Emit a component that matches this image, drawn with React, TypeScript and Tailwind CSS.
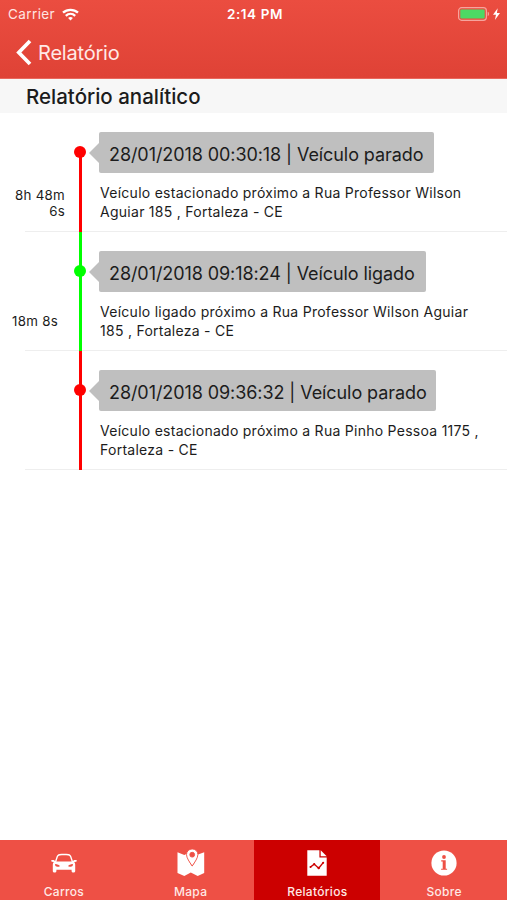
import React from "react";

interface TimelineEvent {
  id: number;
  title: string;
  lines: string[];
  duration: string[];
  moving: boolean;
  /** Width of the title bubble, text included. */
  bubbleClass: string;
}

const EVENTS: TimelineEvent[] = [
  {
    id: 1,
    title: "28/01/2018 00:30:18 | Veículo parado",
    lines: [
      "Veículo estacionado próximo a Rua Professor Wilson",
      "Aguiar 185 , Fortaleza - CE",
    ],
    duration: ["8h 48m", "6s"],
    moving: false,
    bubbleClass: "w-[335px]",
  },
  {
    id: 2,
    title: "28/01/2018 09:18:24 | Veículo ligado",
    lines: [
      "Veículo ligado próximo a Rua Professor Wilson Aguiar",
      "185 , Fortaleza - CE",
    ],
    duration: ["18m 8s"],
    moving: true,
    bubbleClass: "w-[327px]",
  },
  {
    id: 3,
    title: "28/01/2018 09:36:32 | Veículo parado",
    lines: [
      "Veículo estacionado próximo a Rua Pinho Pessoa 1175 ,",
      "Fortaleza - CE",
    ],
    duration: [],
    moving: false,
    bubbleClass: "w-[337px]",
  },
];

function WifiIcon() {
  return (
    <svg width="17" height="13" viewBox="0 0 17 13" fill="none" stroke="#fff" strokeWidth="2.3">
      <path d="M1 4.7C5.2.8 11.8.8 16 4.7" />
      <path d="M3.8 7.8c2.7-2.5 6.7-2.5 9.4 0" />
      <path d="M8.5 12.4 6.1 10c1.4-1.2 3.4-1.2 4.8 0z" fill="#fff" stroke="none" />
    </svg>
  );
}

function BatteryIcon() {
  return (
    <svg width="44" height="14" viewBox="0 0 44 14">
      <rect x="0.6" y="0.7" width="27.8" height="12.6" rx="3" fill="none" stroke="#f6a49d" strokeWidth="1.2" />
      <rect x="2.3" y="2.5" width="24.4" height="9" rx="1.2" fill="#4cd964" />
      <path d="M29.7 4.8c1.8.6 1.8 3.8 0 4.4z" fill="#f6a49d" />
      <path d="M39.7 1.3 35 7.8h3l-1.1 5.3 5.1-7h-3.1z" fill="#fff" />
    </svg>
  );
}

function CarIcon() {
  return (
    <svg width="26" height="26" viewBox="0 0 26 26" fill="#fff">
      <path
        fillRule="evenodd"
        d="M8.4 4.1c3-.6 6.2-.6 9.2 0 1.5.3 2.4 1.2 2.9 2.6l1.4 4.2 1.3-.9h2c.7 0 .9 1.5 0 1.7l-2 .4c.7.8 1 1.6 1 2.6v6.4c0 2-3.6 2-3.6 0v-1.3H5.4v1.3c0 2-3.6 2-3.6 0v-6.4c0-1 .3-1.8 1-2.6l-2-.4c-.9-.2-.7-1.7 0-1.7h2l1.3.9 1.4-4.2c.5-1.4 1.4-2.3 2.9-2.6Zm.4 1.4c-1 .2-1.6.8-2 1.8l-1.4 4.1h15.2l-1.4-4.1c-.4-1-1-1.6-2-1.8-2.8-.5-5.6-.5-8.4 0ZM4.2 14c-.4 1.8.6 2.6 2.2 2.7 1 .1 2.2.1 2.4-.4.4-1-2.7-2.2-4.6-2.3Zm17.6 0c-1.9.1-5 1.3-4.6 2.3.2.5 1.4.5 2.4.4 1.6-.1 2.6-.9 2.2-2.7Z"
      />
    </svg>
  );
}

function MapIcon() {
  return (
    <svg width="28" height="28" viewBox="0 0 28 28" fill="#fff">
      <path d="M.5 3.2 7.3 5.9 10 4.7c.3 4.3 2.4 8.8 5.2 12.8 2.8-3.9 4.8-8.3 5.2-12.5l.6.5 6.2-2.3v20.9l-6.5 2.9-6.9-3.5-6.5 3.5-6.8-2.9z" />
      <path
        fillRule="evenodd"
        d="M15.2 0c3.3 0 5.7 2.4 5.7 5.5 0 3.4-2.9 7.4-5.7 11.5C12.4 12.9 9.5 8.9 9.5 5.5 9.5 2.4 11.9 0 15.2 0Zm0 3.3a2.4 2.4 0 1 0 0 4.8 2.4 2.4 0 0 0 0-4.8Z"
        stroke="#ee5045"
        strokeWidth="0.9"
      />
    </svg>
  );
}

function ReportIcon() {
  return (
    <svg width="20" height="26" viewBox="0 0 20 26">
      <path d="M.3.3h12.1v7.2h7.3v18.2H.3z" fill="#fff" />
      <path d="m13.7.3 6 6h-6z" fill="#fff" />
      <path d="m3.2 17.3 4-3.2 4.5 4.1 4.7-5.8" fill="none" stroke="#cc0000" strokeWidth="1.4" />
      <g fill="#cc0000">
        <circle cx="3.5" cy="17" r="1" />
        <circle cx="7.2" cy="14.2" r="1.1" />
        <circle cx="11.7" cy="18" r="1.2" />
        <circle cx="16.2" cy="12.7" r="1" />
      </g>
    </svg>
  );
}

function InfoIcon() {
  return (
    <svg width="26" height="26" viewBox="0 0 26 26">
      <circle cx="13" cy="13" r="12.6" fill="#fff" />
      <circle cx="13" cy="7" r="1.9" fill="#ee5045" />
      <path d="M10.2 10.3h4.5v8.4h1.4v1.1h-6v-1.1h1.6v-7.3h-1.5z" fill="#ee5045" />
    </svg>
  );
}

const TABS = [
  { label: "Carros", icon: <CarIcon /> },
  { label: "Mapa", icon: <MapIcon /> },
  { label: "Relatórios", icon: <ReportIcon />, active: true },
  { label: "Sobre", icon: <InfoIcon /> },
];

function TimelineRow({ event }: { event: TimelineEvent }) {
  const color = event.moving ? "bg-[#00ff00]" : "bg-[#ff0000]";
  // Nothing comes before the first stop, so its rail starts at the dot.
  const isFirst = event.id === 1;
  return (
    <li className="relative flex h-[119px]">
      <div className="absolute bottom-0 left-[25px] right-0 h-px bg-[#eeeeee]" />
      <div
        className={`flex h-full flex-col whitespace-nowrap text-right text-[13.3px] leading-4 tracking-[0.3px] ${
          event.duration.length > 1 ? "w-[65px] pt-[73.5px]" : "w-[58px] pt-[81px]"
        }`}
      >
        {event.duration.map((part) => (
          <span key={part}>{part}</span>
        ))}
      </div>
      <div
        className={`relative flex w-3 justify-center ${
          event.duration.length > 1 ? "ml-[9px]" : "ml-4"
        }`}
      >
        <div className={`w-[3px] ${color} ${isFirst ? "mt-[39px]" : ""}`} />
        <div className={`absolute top-[33px] size-3 rounded-full ${color}`} />
      </div>
      <div className="flex min-w-0 flex-1 flex-col items-start pt-[19px]">
        <div className="flex items-center pl-[3px]">
          <svg width="10" height="20" viewBox="0 0 10 20">
            <path d="M10 0v20L0 10z" fill="#bfbfbf" />
          </svg>
          <div
            className={`flex h-[41px] items-center whitespace-nowrap rounded-[2px] bg-[#bfbfbf] pl-[10px] pt-[3px] text-[18px] tracking-[-0.08px] ${event.bubbleClass}`}
          >
            {event.title}
          </div>
        </div>
        <div className="whitespace-nowrap pl-[14px] pt-[10px] text-[14px] leading-[19.4px] tracking-[0.27px]">
          {event.lines.map((line) => (
            <p key={line}>{line}</p>
          ))}
        </div>
      </div>
    </li>
  );
}

export default function App() {
  return (
    <div className="flex h-[900px] w-[507px] flex-col overflow-hidden bg-white font-['Inter',sans-serif] text-[#1c1c1c]">
      <header className="h-[79px] border-b border-[#e9675d] bg-linear-to-b from-[#eb4d40] to-[#df4236] text-white">
        <div className="grid h-[27px] grid-cols-3 items-center pl-2 pr-[5px] text-[13.5px]">
          <div className="flex items-center gap-[7px] pt-px tracking-[0.4px] text-[#ffe5e2]">
            Carrier
            <WifiIcon />
          </div>
          <div className="pt-px text-center font-semibold tracking-[0.6px]">2:14 PM</div>
          <div className="flex justify-end">
            <BatteryIcon />
          </div>
        </div>
        <div className="flex h-[51px] items-center pl-4">
          <svg width="16" height="27" viewBox="0 0 16 27">
            <path d="M14 2 2.8 13.5 14 25" fill="none" stroke="#fff" strokeWidth="3.7" />
          </svg>
          <span className="pl-[6px] text-[20px] tracking-[-0.2px] text-[#ffe9e6]">Relatório</span>
        </div>
      </header>

      <main className="flex-1">
        <h1 className="flex h-[34px] items-center bg-[#f7f7f7] pl-[26px] pt-[3px] text-[20.5px] font-medium">
          Relatório analítico
        </h1>
        <ul>
          {EVENTS.map((event) => (
            <TimelineRow key={event.id} event={event} />
          ))}
        </ul>
      </main>

      <nav className="grid h-[60px] grid-cols-4 bg-[#ee5045] text-white">
        {TABS.map((tab) => (
          <div
            key={tab.label}
            className={`flex flex-col items-center pl-px pt-[9px] ${tab.active ? "bg-[#cc0000]" : ""}`}
          >
            <div className="flex h-7 items-center">{tab.icon}</div>
            <span className="pt-[7px] text-[12px] font-medium leading-4 tracking-[0.3px] text-[#ffe9e6]">
              {tab.label}
            </span>
          </div>
        ))}
      </nav>
    </div>
  );
}
